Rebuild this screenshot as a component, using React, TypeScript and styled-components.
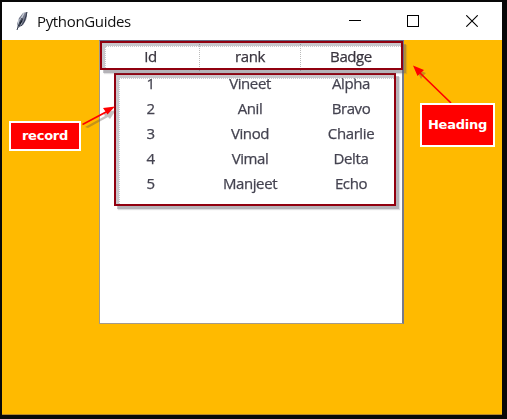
import React from 'react';
import styled, { createGlobalStyle } from 'styled-components';

const GlobalStyle = createGlobalStyle`
  * { box-sizing: border-box; }
  body { margin: 0; background: #080808; overflow: hidden; }
`;

const Desktop = styled.div`
  position: relative;
  width: 507px;
  height: 419px;
  padding: 2px 5px 4px 2px;
  background: #080808;
`;

const Window = styled.main`
  display: flex;
  flex-direction: column;
  height: 413px;
  background: #ffba00;
  border-bottom: 1px solid #b5852c;
`;

const TitleBar = styled.header`
  display: flex;
  align-items: center;
  flex: 0 0 38px;
  padding: 0 1px 0 13px;
  background: #fff;
`;

const Title = styled.h1`
  flex: 1;
  margin: -1px 0 0 8px;
  font: 400 15px/20px 'Open Sans', sans-serif;
  letter-spacing: -0.34px;
  color: #111;
`;

const WindowButton = styled.button`
  display: flex;
  align-items: center;
  justify-content: center;
  width: 58.5px;
  height: 38px;
  padding: 0;
  border: 0;
  background: none;
`;

const Content = styled.section`
  display: flex;
  justify-content: center;
  padding-right: 1px;
`;

const Tree = styled.div`
  width: 305px;
  height: 284px;
  border: 1px solid #a39a8c;
  border-top-color: #686b83;
  border-right: 2px solid #777a8b;
  background: #fff;
`;

const Row = styled.div<{ $head?: boolean }>`
  display: grid;
  grid-template-columns: 100px 101px 101px;
  height: ${(p) => (p.$head ? 30 : 25)}px;
  font: 400 15px/${(p) => (p.$head ? 30 : 25)}px 'Open Sans', sans-serif;
  letter-spacing: -0.4px;
  color: ${(p) => (p.$head ? '#39343e' : '#444350')};
  -webkit-text-stroke: 0.25px currentColor;
  text-align: center;
`;

const Cell = styled.div<{ $divided?: boolean }>`
  border-right: 1px ${(p) => (p.$divided ? 'dotted #bbb' : 'solid transparent')};

  &:first-child { padding-left: 2px; }
`;

const Outline = styled.div<{ $x: number; $y: number; $w: number; $h: number }>`
  position: absolute;
  left: ${(p) => p.$x}px;
  top: ${(p) => p.$y}px;
  width: ${(p) => p.$w}px;
  height: ${(p) => p.$h}px;
  border: 2px solid #91000f;
  box-shadow: 3px 3px 0 rgba(96, 94, 105, 0.34), 4px 4px 1px rgba(96, 94, 105, 0.2);

  &::before {
    content: '';
    position: absolute;
    inset: 0;
    box-shadow: inset 3px 3px 0 #c9c8cc;
    mix-blend-mode: multiply;
  }

  &::after {
    content: '';
    position: absolute;
    inset: 3px 0 0 3px;
    border: dotted #c9c8cc;
    border-width: 1px 0 0 1px;
  }
`;

const Callout = styled.div<{ $x: number; $y: number; $w: number; $h: number }>`
  position: absolute;
  left: ${(p) => p.$x}px;
  top: ${(p) => p.$y}px;
  display: flex;
  align-items: center;
  justify-content: center;
  width: ${(p) => p.$w}px;
  height: ${(p) => p.$h}px;
  border: 2px solid #fff;
  background: #f00;
  color: #fff;
  font: 700 13px/18px 'DejaVu Sans', sans-serif;
  letter-spacing: -0.25px;
`;

const Arrows = styled.svg`
  position: absolute;
  left: 0;
  top: 0;
  pointer-events: none;
`;

const records = [
  ['1', 'Vineet', 'Alpha'],
  ['2', 'Anil', 'Bravo'],
  ['3', 'Vinod', 'Charlie'],
  ['4', 'Vimal', 'Delta'],
  ['5', 'Manjeet', 'Echo'],
];

const Feather = () => (
  <svg width="14" height="22" viewBox="0 0 14 22">
    <path d="M12 2 8 3 4 8 2 14 3 18 8 15 11 10 12 6Z" fill="#777b8d" />
    <path d="M9 3 6 9 6 15M4 9 3 17" stroke="#c5cbd5" strokeWidth="1.4" fill="none" />
    <path d="M10 4 8 8 7 12 4 17 5 12 8 8Z" fill="#111925" />
    <path d="M12 2 11 6 9 12 6 16M7 8 4 14 2 20" stroke="#343b4c" fill="none" />
  </svg>
);

export default function App() {
  return (
    <Desktop>
      <GlobalStyle />
      <Window>
        <TitleBar>
          <Feather />
          <Title>PythonGuides</Title>
          <WindowButton aria-label="Minimize">
            <svg width="12" height="12" shapeRendering="crispEdges"><path d="M0 5.5H12" stroke="#000" /></svg>
          </WindowButton>
          <WindowButton aria-label="Maximize">
            <svg width="12" height="12" shapeRendering="crispEdges"><rect x=".5" y=".5" width="11" height="11" stroke="#000" fill="none" /></svg>
          </WindowButton>
          <WindowButton aria-label="Close">
            <svg width="12" height="12"><path d="m.3.3 11.4 11.4m0-11.4L.3 11.7" stroke="#000" strokeWidth="1.1" /></svg>
          </WindowButton>
        </TitleBar>
        <Content>
          <Tree>
            <Row $head>
              <Cell $divided>Id</Cell>
              <Cell $divided>rank</Cell>
              <Cell>Badge</Cell>
            </Row>
            {records.map((record) => (
              <Row key={record[0]}>
                {record.map((value) => <Cell key={value}>{value}</Cell>)}
              </Row>
            ))}
          </Tree>
        </Content>
      </Window>
      <Outline $x={114} $y={73} $w={282} $h={133} />
      <Outline $x={100} $y={41} $w={303} $h={29} />
      <Arrows width="507" height="419">
        <g fill="#594b46" opacity=".34">
          <path d="M85 127 105 116 103 113 116 110 110 119 108 117 88 128Z" />
          <path d="M416 69 426 73 423 76 421 79Z" />
        </g>
        <g fill="#f00" stroke="#f00">
          <path d="M82.5 124.5 107 111.5M451 103 420 73" strokeWidth="1.7" />
          <path d="M115 106.5 103 108 107.5 114.5ZM413 65.5 417.5 76 424 70Z" stroke="none" />
        </g>
      </Arrows>
      <Callout $x={9} $y={121} $w={72} $h={30}>record</Callout>
      <Callout $x={420} $y={103} $w={75} $h={44}>Heading</Callout>
    </Desktop>
  );
}
